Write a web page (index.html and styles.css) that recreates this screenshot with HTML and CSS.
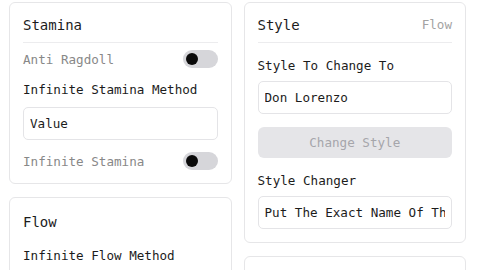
FILE: index.html
```html
<!DOCTYPE html>
<html lang="en">
  <head>
    <meta charset="UTF-8" />
    <meta name="viewport" content="width=device-width, initial-scale=1.0" />
    <title>Script Hub</title>
    <link rel="stylesheet" href="styles.css">
  </head>
  <body>
    <div class="columns">
      <div class="column">
        <section class="card">
          <div class="card-header">
            <h2 class="card-title">Stamina</h2>
          </div>
          <div class="toggle-row first">
            <span class="toggle-label">Anti Ragdoll</span>
            <span class="toggle"><span class="knob"></span></span>
          </div>
          <label class="field-label">Infinite Stamina Method</label>
          <input class="text-input" type="text" value="Value" readonly />
          <div class="toggle-row">
            <span class="toggle-label">Infinite Stamina</span>
            <span class="toggle"><span class="knob"></span></span>
          </div>
        </section>

        <section class="card">
          <div class="card-header plain">
            <h2 class="card-title">Flow</h2>
          </div>
          <label class="field-label loose">Infinite Flow Method</label>
          <input class="text-input" type="text" value="Value" readonly />
        </section>
      </div>

      <div class="column">
        <section class="card">
          <div class="card-header">
            <h2 class="card-title">Style</h2>
            <span class="card-tag">Flow</span>
          </div>
          <label class="field-label tight">Style To Change To</label>
          <input class="text-input close" type="text" value="Don Lorenzo" readonly />
          <button class="btn" disabled>Change Style</button>
          <label class="field-label tight">Style Changer</label>
          <input class="text-input close" type="text" value="Put The Exact Name Of The Style" readonly />
        </section>

        <!-- next section starts below the fold -->
        <section class="card empty"></section>
      </div>
    </div>
  </body>
</html>
```

FILE: styles.css
```css
/* base */
* {
  margin: 0;
  padding: 0;
  box-sizing: border-box;
}

body {
  background-color: #fff;
  color: #1c1c1c;
  font-family: "DejaVu Sans Mono", "Liberation Mono", monospace;
  font-size: 12.6px;
  height: 270px;
  overflow: hidden;
}

.columns {
  display: grid;
  grid-template-columns: 1fr 1fr;
  gap: 12px;
  padding: 2px 14px 0 9px;
  align-items: start;
}

.column {
  display: flex;
  flex-direction: column;
  gap: 13px;
}

/* cards */
.card {
  display: flex;
  flex-direction: column;
  background-color: #fff;
  border: 1px solid #e6e6e8;
  border-radius: 6px;
  padding: 12px 13px 13px;
}

.card.empty {
  min-height: 60px;
}

.card-header {
  display: flex;
  justify-content: space-between;
  align-items: center;
  height: 28px;
  padding-bottom: 8px;
  border-bottom: 1px solid #ececee;
}

.card-header.plain {
  border-bottom: none;
  height: 22px;
  padding: 2px 0 0;
}

.card-title {
  font-size: 14px;
  font-weight: normal;
  line-height: 20px;
}

.card-tag {
  color: #a3a3a3;
  line-height: 20px;
}

/* toggles */
.toggle-row {
  display: flex;
  justify-content: space-between;
  align-items: center;
  height: 18px;
  margin-top: 12px;
}

.toggle-row.first {
  margin-top: 7px;
}

.toggle-label {
  color: #888;
}

.toggle {
  display: flex;
  align-items: center;
  width: 35px;
  height: 18px;
  border-radius: 9px;
  background-color: #d6d6da;
  padding-left: 3px;
}

.knob {
  width: 12px;
  height: 12px;
  border-radius: 50%;
  background-color: #0a0a0a;
}

/* fields */
.field-label {
  display: block;
  line-height: 20px;
  margin-top: 12px;
}

.field-label.tight {
  margin-top: 13px;
}

.field-label.loose {
  margin-top: 14px;
}

.text-input {
  display: block;
  width: 100%;
  height: 33px;
  margin-top: 7px;
  padding: 0 6px;
  border: 1px solid #e4e4e7;
  border-radius: 5px;
  background-color: #fff;
  color: #1c1c1c;
  font-family: inherit;
  font-size: 12.6px;
  outline: none;
}

.text-input.close {
  margin-top: 5px;
}

.btn {
  height: 31px;
  margin-top: 13px;
  border: none;
  border-radius: 6px;
  background-color: #e5e5e8;
  color: #a6a6ab;
  font-family: inherit;
  font-size: 12.6px;
}
```
